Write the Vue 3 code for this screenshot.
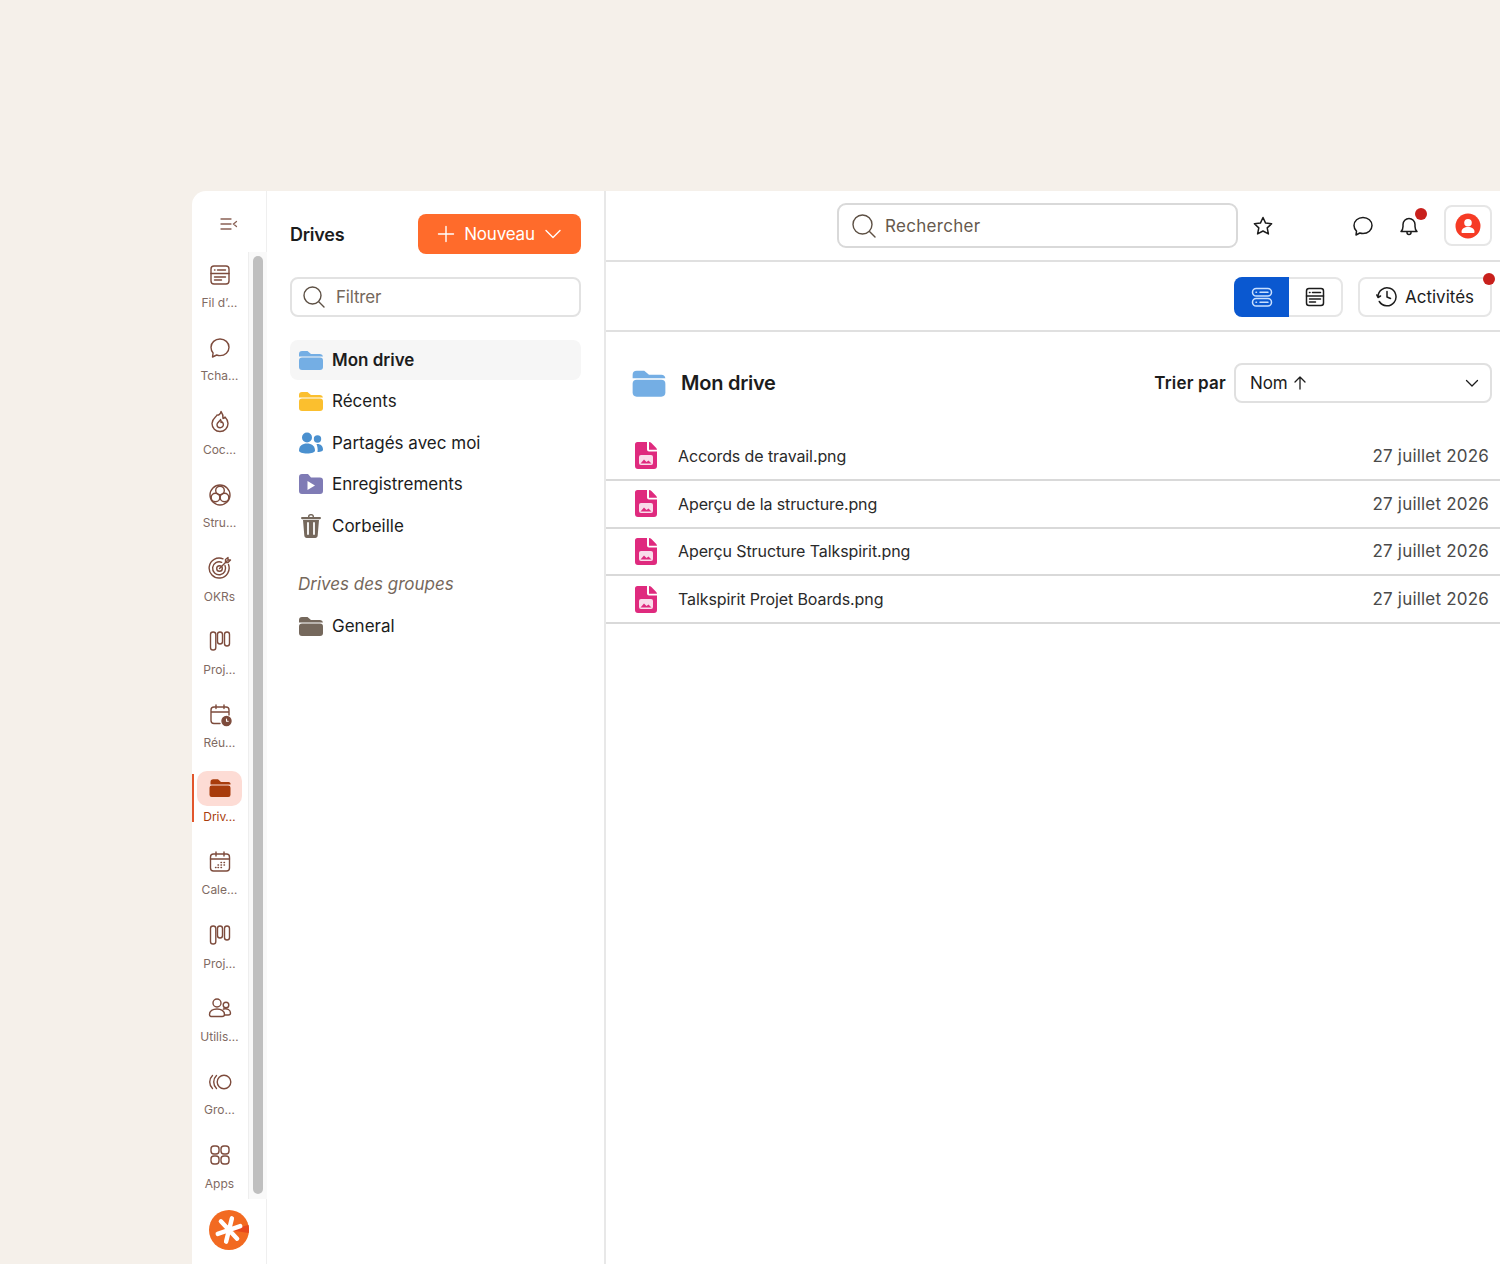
<template>
  <div class="page">
    <div class="window">
      <aside class="rail">
        <div class="rail-head">
          <svg class="toggle" width="18" height="14" viewBox="0 0 18 14" fill="none" stroke="#8a6256" stroke-width="1.3" stroke-linecap="round">
            <path d="M1 2h10M1 7h10M1 12h10M16.500 4.500 13.500 7l3 2.500" />
          </svg>
        </div>
        <div class="rail-body">
          <nav class="rail-list">
            <a v-for="item in railItems" :key="item.y" class="rail-item" :class="{ active: item.active }">
              <span class="rail-icon">
                <svg width="24" height="24" viewBox="0 0 24 24" fill="none" stroke="currentColor" stroke-width="1.4" stroke-linecap="round" stroke-linejoin="round" v-html="item.icon"></svg>
              </span>
              <span class="rail-label">{{ item.label }}</span>
            </a>
          </nav>
          <div class="scroll-track"><div class="scroll-thumb"></div></div>
        </div>
        <div class="rail-logo">
          <svg width="40" height="40" viewBox="0 0 40 40">
            <circle cx="20" cy="20" r="20" fill="#f26a21" />
            <path d="M20 20 39.500 15a20 20 0 0 1 .2 8z" fill="#e8481c" />
            <path d="M20 8v24M10 13.500l20 13M10 26.500l20-13" stroke="#fff" stroke-width="4.400" stroke-linecap="round" transform="rotate(14 20 20)" />
          </svg>
        </div>
      </aside>

      <section class="drives">
        <div class="drives-head">
          <h2>Drives</h2>
          <button class="new-btn">
            <svg width="18" height="18" viewBox="0 0 18 18" fill="none" stroke="#fff" stroke-width="1.4" stroke-linecap="round"><path d="M9 1.500v15M1.500 9h15" /></svg>
            <span>Nouveau</span>
            <svg width="18" height="18" viewBox="0 0 18 18" fill="none" stroke="#fff" stroke-width="1.4" stroke-linecap="round" stroke-linejoin="round"><path d="m2 5.500 7 7 7-7" /></svg>
          </button>
        </div>
        <div class="filter">
          <svg width="24" height="24" viewBox="0 0 24 24" fill="none" stroke="#5d5044" stroke-width="1.4" stroke-linecap="round"><circle cx="10.500" cy="10.500" r="8.500" /><path d="m17 17 5 5" /></svg>
          <span>Filtrer</span>
        </div>
        <ul class="drive-list">
          <li class="drive-row current">
            <svg width="26" height="22" viewBox="0 0 26 22"><path d="M1 5a3 3 0 0 1 3-3h5.500l3.500 3h9a3 3 0 0 1 3 2.600H1z" fill="#74aee4" /><rect x="1" y="8.600" width="24" height="12.400" rx="3" fill="#74aee4" /></svg>
            <span>Mon drive</span>
          </li>
          <li class="drive-row">
            <svg width="26" height="22" viewBox="0 0 26 22"><path d="M1 5a3 3 0 0 1 3-3h5.500l3.500 3h9a3 3 0 0 1 3 2.600H1z" fill="#fbbf2e" /><rect x="1" y="8.600" width="24" height="12.400" rx="3" fill="#fbbf2e" /></svg>
            <span>Récents</span>
          </li>
          <li class="drive-row">
            <svg width="26" height="24" viewBox="0 0 26 24" fill="#4a90cf"><circle cx="9" cy="6.500" r="5" /><circle cx="19.500" cy="8" r="3.700" /><path d="M1 19.500C1 15 4.500 12.500 9 12.500s8 2.500 8 7c0 2-3.500 3-8 3s-8-1-8-3z" /><path d="M18.500 13c3.500-.6 6.500 1.500 6.500 5.500 0 1.500-1.500 2.500-5.500 2.500.5-3-.2-5.800-1-8z" /></svg>
            <span>Partagés avec moi</span>
          </li>
          <li class="drive-row">
            <svg width="26" height="22" viewBox="0 0 26 22"><path d="M1 4a3 3 0 0 1 3-3h6l3 3.500h9a3 3 0 0 1 3 3V18a3 3 0 0 1-3 3H4a3 3 0 0 1-3-3z" fill="#7f7bb5" /><path d="M9.500 8v9l7.500-4.500z" fill="#fff" /></svg>
            <span>Enregistrements</span>
          </li>
          <li class="drive-row">
            <svg width="26" height="26" viewBox="0 0 26 26" fill="#75685c"><path d="M10 3.500C10 2 11 1 12.500 1h1C15 1 16 2 16 3.500V4h-1.500v-.5c0-.7-.4-1-1-1h-1c-.6 0-1 .3-1 1V4H10z" /><rect x="3" y="4" width="20" height="2.200" rx="1.100" /><path d="M5 7h16l-1.300 15.500c-.1 1.400-1 2.500-2.500 2.500H8.800c-1.500 0-2.400-1.100-2.500-2.500z" /><path d="M10 10v11M16 10v11" stroke="#fff" stroke-width="1.800" stroke-linecap="round" /></svg>
            <span>Corbeille</span>
          </li>
        </ul>
        <p class="group-title">Drives des groupes</p>
        <div class="drive-row">
          <svg width="26" height="22" viewBox="0 0 26 22"><path d="M1 5a3 3 0 0 1 3-3h5.500l3.500 3h9a3 3 0 0 1 3 2.600H1z" fill="#75685c" /><rect x="1" y="8.600" width="24" height="12.400" rx="3" fill="#75685c" /></svg>
          <span>General</span>
        </div>
      </section>

      <main class="main">
        <header class="topbar">
          <div class="search">
            <svg width="26" height="26" viewBox="0 0 26 26" fill="none" stroke="#5d5044" stroke-width="1.400" stroke-linecap="round"><circle cx="11.500" cy="11.500" r="9.500" /><path d="m18.500 18.500 5.500 5.500" /></svg>
            <span>Rechercher</span>
          </div>
          <svg class="star" width="22" height="22" viewBox="0 0 22 22" fill="none" stroke="#1c1c1c" stroke-width="1.500" stroke-linejoin="round"><path d="m11 2.500 2.600 5.600 6 .7-4.400 4.100 1.200 6L11 16l-5.400 2.900 1.200-6L2.400 8.800l6-.7z" /></svg>
          <div class="top-right">
            <svg width="22" height="22" viewBox="0 0 22 22" fill="none" stroke="#1c1c1c" stroke-width="1.500" stroke-linejoin="round"><path d="M11 2.500c5 0 9 3.500 9 8s-4 8-9 8c-1.100 0-2.200-.2-3.200-.5L4 20l.5-3.900C3 14.700 2 12.700 2 10.500c0-4.500 4-8 9-8z" /></svg>
            <span class="bell">
              <svg width="22" height="22" viewBox="0 0 22 22" fill="none" stroke="#1c1c1c" stroke-width="1.500" stroke-linecap="round" stroke-linejoin="round"><path d="M3 16.500c1.300-1.200 2-2.500 2-5V9.500a6 6 0 0 1 12 0v2c0 2.500.7 3.800 2 5zM9 16.500v1a2 2 0 0 0 4 0v-1" /></svg>
              <i class="dot bell-dot"></i>
            </span>
            <div class="avatar-box">
              <svg width="26" height="26" viewBox="0 0 26 26"><circle cx="13" cy="13" r="12.500" fill="#f63b25" /><circle cx="13" cy="9.800" r="3.800" fill="#fff" /><path d="M6.500 19c0-3.500 2.800-5 6.500-5s6.500 1.500 6.500 5c0 .8-.5 1-1 1h-11c-.5 0-1-.2-1-1z" fill="#fff" /></svg>
            </div>
          </div>
        </header>

        <div class="toolbar">
          <div class="view-switch">
            <button class="view-btn selected">
              <svg width="22" height="22" viewBox="0 0 22 22" fill="none" stroke="#c9e0ff" stroke-width="1.500" stroke-linecap="round"><rect x="1.500" y="2.500" width="19" height="7.500" rx="3.700" /><rect x="1.500" y="12.500" width="19" height="7.500" rx="3.700" /><path d="M5 6.200h.5M9 6.200h8M5 16.200h.5M9 16.200h8" /></svg>
            </button>
            <button class="view-btn">
              <svg width="22" height="22" viewBox="0 0 22 22" fill="none" stroke="#1c1c1c" stroke-width="1.500" stroke-linecap="round"><rect x="2.500" y="2.500" width="17" height="17" rx="2.500" /><path d="M5.500 6.500h.5M8.500 6.500h8M2.500 10h17M5.500 13h11M5.500 16h6" /></svg>
            </button>
          </div>
          <button class="activity">
            <svg width="22" height="22" viewBox="0 0 22 22" fill="none" stroke="#1c1c1c" stroke-width="1.500" stroke-linecap="round" stroke-linejoin="round"><path d="M3.300 15.500A9 9 0 1 0 2 11M.8 9l1.200 2.500L4.500 10M11 5.500V11l3.500 1.500" /></svg>
            <span>Activités</span>
            <i class="dot activity-dot"></i>
          </button>
        </div>

        <div class="title-row">
          <svg width="36" height="30" viewBox="0 0 26 22"><path d="M1 5a3 3 0 0 1 3-3h5.500l3.500 3h9a3 3 0 0 1 3 2.600H1z" fill="#74aee4" /><rect x="1" y="8.600" width="24" height="12.400" rx="3" fill="#74aee4" /></svg>
          <h1>Mon drive</h1>
          <label class="sort-label">Trier par</label>
          <div class="sort-select">
            <span>Nom</span>
            <svg width="16" height="16" viewBox="0 0 16 16" fill="none" stroke="#1c1c1c" stroke-width="1.300" stroke-linecap="round" stroke-linejoin="round"><path d="M8 14V2M3 7l5-5 5 5" /></svg>
            <svg class="caret" width="14" height="14" viewBox="0 0 14 14" fill="none" stroke="#1c1c1c" stroke-width="1.300" stroke-linecap="round" stroke-linejoin="round"><path d="m1.500 4.500 5.500 5.500 5.500-5.500" /></svg>
          </div>
        </div>

        <ul class="files">
          <li v-for="file in files" :key="file" class="file-row">
            <svg width="22" height="27" viewBox="0 0 22 27">
              <path d="M2.500 0H12v7.500a2 2 0 0 0 2 2h8V24a3 3 0 0 1-3 3H3a3 3 0 0 1-3-3V2.500A2.500 2.500 0 0 1 2.500 0z" fill="#df2a7e" />
              <path d="M14 0c1 0 1.700.3 2.400 1l4.600 4.800c.6.600 1 1.200 1 1.900h-8z" fill="#df2a7e" />
              <rect x="4" y="13" width="14" height="10" rx="2" fill="#f9dcea" />
              <path d="m5.500 21.500 3.500-4 2.500 2.500 2-1.500 3 3z" fill="#df2a7e" />
            </svg>
            <span class="file-name">{{ file }}</span>
            <span class="file-date">27 juillet 2026</span>
          </li>
        </ul>
      </main>
    </div>
  </div>
</template>

<script setup>
const feed = '<rect x="3" y="3" width="18" height="18" rx="3"/><path d="M6.500 7h.5M9.500 7h8M3 10.500h18M6.500 14h11M6.500 17h7"/>'
const chat = '<path d="M12 3c5 0 9 3.600 9 8.300s-4 8.300-9 8.300c-1.200 0-2.300-.2-3.300-.6L4.500 21l.6-4.100C3.800 15.500 3 13.500 3 11.300 3 6.600 7 3 12 3z"/>'
const flame = '<path d="M13 2.500c-.3 2.500-2.500 4-4 3.500-.2 1.800-5 3.500-5 8.500a8 8 0 0 0 16 0c0-3-1.500-5-3-6.500-.5 1-1.200 1.500-2 1.500.3-2.500-.5-5-2-7z"/><path d="M12.500 10.500c0 1.500-3.500 2.500-3.500 5a3.200 3.200 0 0 0 6.400 0c0-1.300-.7-2-1.400-2.600-.3.400-.6.600-1 .6.200-1.200 0-2.400-.5-3z"/>'
const structure = '<circle cx="12" cy="12" r="10"/><circle cx="12" cy="7.500" r="4.300"/><circle cx="7.500" cy="14.500" r="4.300"/><circle cx="16.500" cy="14.500" r="4.300"/>'
const target = '<path d="M20.500 8.500A10 10 0 1 1 15 2.800"/><path d="M17 9.500a6.500 6.500 0 1 1-3.300-3.200"/><circle cx="11.500" cy="12.500" r="2.800"/><path d="m11.500 12.500 7.500-7.500M17.500 6.500V3.500L20 1.500V4h2.500L20 6.500z"/>'
const board = '<rect x="2.500" y="3" width="5.300" height="18" rx="2.600"/><rect x="9.500" y="3" width="5" height="12" rx="2.500"/><rect x="16.500" y="3" width="5" height="14" rx="2.500"/>'
const meeting = '<path d="M12 20.500H6a3 3 0 0 1-3-3V7a3 3 0 0 1 3-3h12a3 3 0 0 1 3 3v5M3 9h18M8 2v3.500M16 2v3.500"/><circle cx="18.500" cy="18" r="4.500" fill="currentColor"/><path d="M18.500 16v2.200h1.700" stroke="#fff" stroke-width="1.100"/>'
const folder = '<path d="M2.500 6a2.800 2.800 0 0 1 2.800-2.800h4.700L13 6h7.500A2 2 0 0 1 22.500 8.500h-20z" fill="currentColor" stroke="none"/><rect x="1.500" y="9.500" width="21" height="11.500" rx="2.200" fill="currentColor" stroke="none"/>'
const calendar = '<rect x="2.500" y="4" width="19" height="17" rx="3"/><path d="M2.500 9h19M8 2v4M16 2v4M13 12.500h.5M16 12.500h.5M10 15h.5M13 15h.5M16 15h.5M7.500 17.500h.5M10 17.500h.5M13 17.500h.5"/>'
const users = '<circle cx="9" cy="7" r="4"/><circle cx="18" cy="9" r="2.800"/><path d="M1.500 18.500c0-3.500 3.300-5.500 7.500-5.500s7.500 2 7.500 5.500c0 1.500-1 2-2.500 2H4c-1.500 0-2.500-.5-2.500-2z"/><path d="M15.500 13c3.800-.8 7 .8 7 4 0 1.300-.8 2-2.200 2h-3.800"/>'
const groups = '<circle cx="16" cy="12" r="6.800"/><path d="M8.500 5.500a9 9 0 0 0 0 13M4.500 5.500a9 9 0 0 0 0 13"/>'
const apps = '<rect x="3" y="3" width="8" height="8" rx="3"/><rect x="13" y="3" width="8" height="8" rx="3"/><rect x="3" y="13" width="8" height="8" rx="3"/><rect x="13" y="13" width="8" height="8" rx="3"/>'

const railItems = [
  { label: 'Fil d’…', icon: feed, y: 1 },
  { label: 'Tcha…', icon: chat, y: 2 },
  { label: 'Coc…', icon: flame, y: 3 },
  { label: 'Stru…', icon: structure, y: 4 },
  { label: 'OKRs', icon: target, y: 5 },
  { label: 'Proj…', icon: board, y: 6 },
  { label: 'Réu…', icon: meeting, y: 7 },
  { label: 'Driv…', icon: folder, y: 8, active: true },
  { label: 'Cale…', icon: calendar, y: 9 },
  { label: 'Proj…', icon: board, y: 10 },
  { label: 'Utilis…', icon: users, y: 11 },
  { label: 'Gro…', icon: groups, y: 12 },
  { label: 'Apps', icon: apps, y: 13 }
]

const files = [
  'Accords de travail.png',
  'Aperçu de la structure.png',
  'Aperçu Structure Talkspirit.png',
  'Talkspirit Projet Boards.png'
]
</script>

<style>
html, body {
  margin: 0;
  background: #f5f0ea;
}
</style>

<style scoped>
.page {
  width: 1500px;
  height: 1264px;
  padding: 191px 0 0 192px;
  box-sizing: border-box;
  overflow: hidden;
  font-family: "Inter", "Liberation Sans", sans-serif;
  color: #1c1c1c;
}

.window {
  display: flex;
  height: 1073px;
  background: #fff;
  border-top-left-radius: 14px;
  overflow: hidden;
}

.rail {
  width: 74px;
  flex: none;
  display: flex;
  flex-direction: column;
  border-right: 1px solid #efefef;
}

.rail-head {
  height: 61px;
  padding: 26px 0 0 28px;
  box-sizing: border-box;
}

.toggle {
  display: block;
}

.rail-body {
  height: 947px;
  display: flex;
}

.rail-list {
  width: 55px;
  flex: none;
  margin-right: 1px;
  padding-top: 5px;
}

.rail-item {
  position: relative;
  display: flex;
  flex-direction: column;
  align-items: center;
  height: 73.4px;
  color: #7d4b3c;
}

.rail-icon {
  width: 45px;
  height: 35px;
  display: flex;
  align-items: center;
  justify-content: center;
  border-radius: 10px;
}

.rail-label {
  margin-top: 3px;
  font-size: 12px;
  line-height: 16px;
  color: #7f6a62;
}

.rail-item.active {
  color: #a83c0c;
}

.rail-item.active .rail-icon {
  background: #fddcd5;
}

.rail-item.active .rail-label {
  color: #a83c0c;
}

.rail-item.active::before {
  content: "";
  position: absolute;
  left: 0;
  top: 3px;
  width: 2px;
  height: 48px;
  background: #e2562c;
}

.scroll-track {
  flex: 1;
  padding: 4px;
  background: #f9f9f9;
  border-left: 1px solid #eeeeee;
  box-sizing: border-box;
}

.scroll-thumb {
  width: 10px;
  height: 938px;
  border-radius: 5px;
  background: #bfbfbf;
}

.rail-logo {
  padding: 11px 0 0 17px;
}

.rail-logo svg {
  display: block;
}

.drives {
  width: 339px;
  flex: none;
  padding: 23px 23px 0;
  box-sizing: border-box;
  border-right: 2px solid #e8e8e8;
}

.drives-head {
  display: flex;
  align-items: center;
  justify-content: space-between;
  height: 40px;
}

.drives-head h2 {
  margin: 0;
  font-size: 18px;
  font-weight: 600;
  letter-spacing: -0.25px;
}

.new-btn {
  width: 163px;
  height: 40px;
  display: flex;
  align-items: center;
  justify-content: center;
  gap: 9px;
  border: 0;
  border-radius: 8px;
  background: #ff6b2b;
  color: #fff;
  font: 17px "Inter", sans-serif;
  letter-spacing: -0.2px;
}

.filter {
  margin-top: 23px;
  height: 40px;
  display: flex;
  align-items: center;
  gap: 10px;
  padding: 0 10px;
  box-sizing: border-box;
  border: 2px solid #e2e2e2;
  border-radius: 8px;
  font-size: 17px;
  color: #75685c;
  letter-spacing: -0.2px;
}

.drive-list {
  list-style: none;
  margin: 23px 0 0;
  padding: 0;
}

.drive-row {
  height: 40px;
  margin-bottom: 1.4px;
  display: flex;
  align-items: center;
  gap: 8px;
  padding: 0 8px;
  border-radius: 8px;
  font-size: 17px;
}

.drive-row.current {
  background: #f6f6f6;
  font-weight: 600;
}

.group-title {
  margin: 28px 0 12px 8px;
  height: 20px;
  line-height: 20px;
  font-size: 17px;
  font-style: italic;
  color: #75685c;
}

.main {
  flex: 1;
  min-width: 0;
}

.topbar {
  height: 71px;
  display: flex;
  align-items: center;
  padding: 0 8px 0 231px;
  box-sizing: border-box;
  border-bottom: 2px solid #e0e0e0;
}

.search {
  width: 401px;
  height: 45px;
  flex: none;
  display: flex;
  align-items: center;
  gap: 8px;
  padding: 0 12px;
  box-sizing: border-box;
  border: 2px solid #d9d9d9;
  border-radius: 9px;
  font-size: 17px;
  color: #66594d;
  letter-spacing: 0.3px;
}

.star {
  margin-left: 14px;
}

.top-right {
  margin-left: auto;
  display: flex;
  align-items: center;
}

.bell {
  position: relative;
  display: flex;
  margin: 0 24px;
}

.dot {
  position: absolute;
  width: 12px;
  height: 12px;
  border-radius: 50%;
  background: #c8201c;
}

.bell-dot {
  top: -7px;
  right: -7px;
}

.avatar-box {
  width: 48px;
  height: 41px;
  display: flex;
  align-items: center;
  justify-content: center;
  box-sizing: border-box;
  border: 2px solid #e6e6e6;
  border-radius: 8px;
}

.toolbar {
  height: 70px;
  display: flex;
  justify-content: flex-end;
  align-items: center;
  gap: 15px;
  padding: 1px 8px 0 0;
  box-sizing: border-box;
  border-bottom: 2px solid #e0e0e0;
}

.view-switch {
  display: flex;
  width: 109px;
  height: 40px;
  box-sizing: border-box;
  border: 2px solid #e6e6e6;
  border-radius: 8px;
}

.view-btn {
  flex: 1;
  display: flex;
  align-items: center;
  justify-content: center;
  padding: 0;
  border: 0;
  background: none;
}

.view-btn.selected {
  flex: none;
  width: 55px;
  height: 40px;
  margin: -2px 0 -2px -2px;
  background: #0a58d0;
  border-radius: 8px 0 0 8px;
}

.activity {
  position: relative;
  width: 134px;
  height: 40px;
  display: flex;
  align-items: center;
  justify-content: center;
  gap: 7px;
  background: #fff;
  border: 2px solid #e6e6e6;
  border-radius: 8px;
  font: 17px "Inter", sans-serif;
  color: #1c1c1c;
}

.activity-dot {
  top: -6px;
  right: -5px;
}

.title-row {
  height: 101px;
  display: flex;
  align-items: center;
  padding: 0 8px 0 25px;
  box-sizing: border-box;
}

.title-row h1 {
  margin: 0 0 0 14px;
  font-size: 20px;
  font-weight: 600;
  letter-spacing: -0.25px;
}

.sort-label {
  margin-left: auto;
  font-size: 17px;
  font-weight: 600;
  letter-spacing: 0.2px;
}

.sort-select {
  width: 258px;
  height: 40px;
  margin-left: 8px;
  display: flex;
  align-items: center;
  gap: 4px;
  padding: 0 11px 0 14px;
  box-sizing: border-box;
  border: 2px solid #e0e0e0;
  border-radius: 8px;
  font-size: 17px;
  letter-spacing: -0.1px;
}

.caret {
  margin-left: auto;
}

.files {
  list-style: none;
  margin: 0;
  padding: 0;
}

.file-row {
  height: 47.75px;
  display: flex;
  align-items: center;
  gap: 21px;
  padding: 0 11px 0 29px;
  box-sizing: border-box;
  border-bottom: 2px solid #d9d9d9;
  font-size: 16px;
  letter-spacing: -0.1px;
  color: #2a2a2a;
}

.file-date {
  margin-left: auto;
  font-size: 17px;
  letter-spacing: 0.2px;
  color: #4a4a4a;
}
</style>
